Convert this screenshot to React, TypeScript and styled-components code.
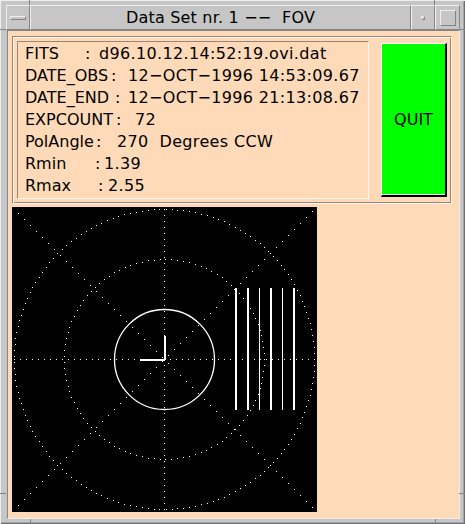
import { createGlobalStyle, styled } from 'styled-components';

const FRAME = '#c6c6c6';
const LIGHT = '#eeeeee';
const DARK = '#858585';
const PEACH = '#ffdab9';
const PEACH_DARK = '#9c8574';
const PEACH_LIGHT = '#fff7ef';

const GlobalStyle = createGlobalStyle`
  html, body {
    margin: 0;
    padding: 0;
    background: ${FRAME};
  }
  body {
    font-family: 'DejaVu Sans', 'Liberation Sans', sans-serif;
  }
`;

// colon / value offsets (px) from the start of the line
const info = [
  { label: 'FITS', colon: 60, at: 74, value: 'd96.10.12.14:52:19.ovi.dat' },
  { label: 'DATE_OBS', colon: 86, at: 103, value: '12\u2212OCT\u22121996 14:53:09.67' },
  { label: 'DATE_END', colon: 90, at: 103, value: '12\u2212OCT\u22121996 21:13:08.67' },
  { label: 'EXPCOUNT', colon: 91, at: 110, value: '72' },
  { label: 'PolAngle', colon: 71, at: 92, value: '270  Degrees CCW' },
  { label: 'Rmin', colon: 70, at: 79, value: '1.39' },
  { label: 'Rmax', colon: 73, at: 83, value: '2.55' },
];

// corner resize marks of the window frame
const marks = [
  { x: 29, y: 0, w: 1, h: 5 },
  { x: 0, y: 29, w: 6, h: 1 },
  { x: 434, y: 0, w: 1, h: 5 },
  { x: 459, y: 29, w: 6, h: 1 },
  { x: 0, y: 493, w: 6, h: 1 },
  { x: 30, y: 519, w: 1, h: 5 },
  { x: 459, y: 493, w: 6, h: 1 },
  { x: 435, y: 519, w: 1, h: 5 },
];

const SIZE = 305;
const C = 152;

const buildDots = () => {
  const dots: [number, number][] = [];
  [150, 100].forEach(r => {
    const n = Math.round((2 * Math.PI * r) / 6);
    for (let i = 0; i < n; i++) {
      const a = (i / n) * 2 * Math.PI;
      dots.push([Math.round(C + r * Math.cos(a)), Math.round(C + r * Math.sin(a))]);
    }
  });
  for (let t = 2; t < SIZE; t += 6) {
    dots.push([C, t]);
    dots.push([t, C]);
  }
  for (let t = 6; t < SIZE - 2; t += 6) {
    dots.push([t, t]);
    dots.push([t, SIZE - 1 - t]);
  }
  return dots;
};

const dots = buildDots();

const bars = [
  { x: 223, w: 2 },
  { x: 234.5, w: 2 },
  { x: 246.5, w: 1 },
  { x: 258, w: 2 },
  { x: 269.5, w: 1 },
  { x: 281, w: 2 },
];

const FovPlot = () => (
  <svg width={SIZE} height={SIZE} viewBox={`0 0 ${SIZE} ${SIZE}`} style={{ display: 'block' }}>
    <rect width={SIZE} height={SIZE} fill="#000" />
    <g fill="#fff" shapeRendering="crispEdges">
      {dots.map(([x, y], i) => (
        <rect key={i} x={x} y={y} width={1} height={1} />
      ))}
    </g>
    <circle cx={C + 0.5} cy={C + 0.5} r={50} fill="none" stroke="#fff" strokeWidth={1.3} />
    <g stroke="#fff" strokeWidth={2} shapeRendering="crispEdges">
      <line x1={C + 0.5} y1={129} x2={C + 0.5} y2={153} />
      <line x1={128} y1={C + 0.5} x2={153} y2={C + 0.5} />
    </g>
    <g fill="#fff" shapeRendering="crispEdges">
      {bars.map(b => (
        <rect key={b.x} x={b.x} y={81} width={b.w} height={122} />
      ))}
    </g>
  </svg>
);

const App = () => (
  <>
    <GlobalStyle />
    <SWindow>
      {marks.map((m, i) => (
        <SMark key={i} style={{ left: m.x, top: m.y, width: m.w, height: m.h }} />
      ))}
      <STitleBar>
        <SFrameButton $width={24}>
          <SMenuBar />
        </SFrameButton>
        <STitle>Data Set nr. 1 {'\u2212\u2212'}&nbsp; FOV</STitle>
        <SFrameButton $width={24}>
          <SMinDot />
        </SFrameButton>
        <SFrameButton $width={25}>
          <SMaxBox />
        </SFrameButton>
      </STitleBar>
      <SClient>
        <SInfoFrame>
          <STextFrame>
            {info.map(row => (
              <SLine key={row.label}>
                <SLabel $width={row.colon}>{row.label}</SLabel>
                <SColon $width={row.at - row.colon}>:</SColon>
                <SValue>{row.value}</SValue>
              </SLine>
            ))}
          </STextFrame>
          <SQuit>QUIT</SQuit>
        </SInfoFrame>
        <SCanvas>
          <FovPlot />
        </SCanvas>
      </SClient>
    </SWindow>
  </>
);

const SWindow = styled.div`
  position: relative;
  box-sizing: border-box;
  width: 465px;
  height: 524px;
  padding: 5px 5px 5px 6px;
  display: flex;
  flex-direction: column;
  background: ${FRAME};
  box-shadow: inset 1px 1px 0 ${LIGHT}, inset -1px -1px 0 #6e6e6e, inset -2px -2px 0 #a4a4a4;
`;

const SMark = styled.div`
  position: absolute;
  background: ${DARK};
`;

const STitleBar = styled.div`
  display: flex;
  height: 25px;
  flex-shrink: 0;
`;

const SFrameButton = styled.div<{ $width: number }>`
  box-sizing: border-box;
  width: ${p => p.$width}px;
  height: 25px;
  display: flex;
  align-items: center;
  justify-content: center;
  border: 1px solid;
  border-color: ${LIGHT} ${DARK} ${DARK} ${LIGHT};
`;

const SMenuBar = styled.div`
  box-sizing: border-box;
  width: 16px;
  height: 4px;
  border: 1px solid;
  border-color: ${LIGHT} ${DARK} ${DARK} ${LIGHT};
`;

const SMinDot = styled.div`
  box-sizing: border-box;
  width: 4px;
  height: 4px;
  border: 1px solid;
  border-color: ${LIGHT} ${DARK} ${DARK} ${LIGHT};
`;

const SMaxBox = styled.div`
  box-sizing: border-box;
  width: 16px;
  height: 16px;
  border: 1px solid;
  border-color: ${LIGHT} ${DARK} ${DARK} ${LIGHT};
`;

const STitle = styled.div`
  flex: 1;
  box-sizing: border-box;
  height: 25px;
  border: 1px solid;
  border-color: ${LIGHT} ${DARK} ${DARK} ${LIGHT};
  font-size: 16px;
  letter-spacing: 0.2px;
  line-height: 23px;
  text-align: center;
  color: #000;
  white-space: pre;
`;

const SClient = styled.div`
  flex: 1;
  margin-left: 1px;
  padding: 5px 0 0 4px;
  background: ${PEACH};
  border: 1px solid;
  border-color: ${DARK} ${LIGHT} ${LIGHT} ${DARK};
`;

const SInfoFrame = styled.div`
  box-sizing: border-box;
  width: 440px;
  height: 168px;
  padding: 4px;
  display: flex;
  align-items: center;
  gap: 12px;
  border: 1px solid;
  border-color: ${PEACH_DARK} ${PEACH_LIGHT} ${PEACH_LIGHT} ${PEACH_DARK};
  box-shadow: inset 1px 1px 0 ${PEACH_LIGHT}, inset -1px -1px 0 ${PEACH_DARK};
`;

const STextFrame = styled.div`
  box-sizing: border-box;
  width: 352px;
  height: 158px;
  padding: 1px 0 0 7px;
  border: 1px solid;
  border-color: ${PEACH_DARK} ${PEACH_LIGHT} ${PEACH_LIGHT} ${PEACH_DARK};
  overflow: hidden;
`;

const SLine = styled.div`
  display: flex;
  font-size: 16px;
  line-height: 22px;
  color: #000;
  white-space: pre;
`;

const SLabel = styled.span<{ $width: number }>`
  flex: none;
  width: ${p => p.$width}px;
`;

const SColon = styled.span<{ $width: number }>`
  flex: none;
  width: ${p => p.$width}px;
`;

const SValue = styled.span`
  letter-spacing: 0.35px;
`;

const SQuit = styled.div`
  box-sizing: border-box;
  width: 66px;
  height: 154px;
  display: flex;
  align-items: center;
  justify-content: center;
  background: #00ff00;
  border-top: 1px solid #fff;
  border-left: 1px solid #fff;
  border-right: 2px solid #000;
  border-bottom: 2px solid #000;
  box-shadow: inset 0 -1px 0 #e8ffe8;
  font-size: 16px;
  color: #000;
`;

const SCanvas = styled.div`
  margin-top: 3px;
  width: ${SIZE}px;
  height: ${SIZE}px;
`;

export default App;
